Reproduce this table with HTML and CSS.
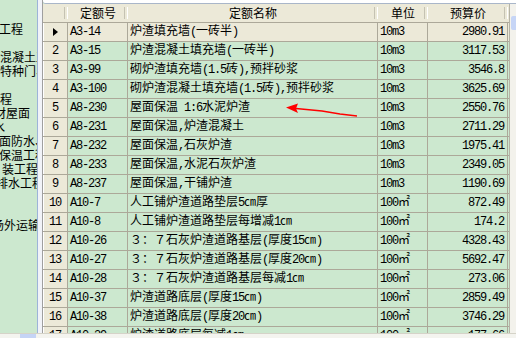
FILE: index.html
```html
<!DOCTYPE html>
<html lang="zh-CN">
<head>
<meta charset="utf-8">
<title>定额</title>
<link rel="stylesheet" href="styles.css">
</head>
<body>
<div class="app">
  <aside class="tree">
    <div class="ln t1">工程</div>
    <div class="ln"></div>
    <div class="ln t0">混凝土工程</div>
    <div class="ln t0">特种门、窗</div>
    <div class="ln"></div>
    <div class="ln t0">程</div>
    <div class="ln t2">材屋面</div>
    <div class="ln t3">水</div>
    <div class="ln t1">面防水、</div>
    <div class="ln t1">保温工程</div>
    <div class="ln t4">装工程</div>
    <div class="ln t5">排水工程</div>
    <div class="ln"></div>
    <div class="ln"></div>
    <div class="ln t6">场外运输</div>
  </aside>
  <div class="split"></div>
  <main class="main">
    <div class="top"></div>
    <div class="body">
      <div class="grid">
        <div class="hdr">
          <div class="h w0"></div>
          <div class="h w1">定额号</div>
          <div class="h w2">定额名称</div>
          <div class="h w3">单位</div>
          <div class="h w4">预算价</div>
        </div>
        <div class="row cur">
          <div class="c w0 ind ptr"><span class="tri"></span></div>
          <div class="c w1 n">A3-14</div>
          <div class="c w2">炉渣填充墙<span class="a">(</span>一砖半<span class="a">)</span></div>
          <div class="c w3 n">10m3</div>
          <div class="c w4 n r">2980.91</div>
        </div>
        <div class="row">
          <div class="c w0 ind n">2</div>
          <div class="c w1 n">A3-15</div>
          <div class="c w2">炉渣混凝土填充墙<span class="a">(</span>一砖半<span class="a">)</span></div>
          <div class="c w3 n">10m3</div>
          <div class="c w4 n r">3117.53</div>
        </div>
        <div class="row">
          <div class="c w0 ind n">3</div>
          <div class="c w1 n">A3-99</div>
          <div class="c w2">砌炉渣填充墙<span class="a">(1.5</span>砖<span class="a">),</span>预拌砂浆</div>
          <div class="c w3 n">10m3</div>
          <div class="c w4 n r">3546.8</div>
        </div>
        <div class="row">
          <div class="c w0 ind n">4</div>
          <div class="c w1 n">A3-100</div>
          <div class="c w2">砌炉渣混凝土填充墙<span class="a">(1.5</span>砖<span class="a">),</span>预拌砂浆</div>
          <div class="c w3 n">10m3</div>
          <div class="c w4 n r">3625.69</div>
        </div>
        <div class="row">
          <div class="c w0 ind n">5</div>
          <div class="c w1 n">A8-230</div>
          <div class="c w2">屋面保温<span class="a"> 1:6</span>水泥炉渣</div>
          <div class="c w3 n">10m3</div>
          <div class="c w4 n r">2550.76</div>
        </div>
        <div class="row">
          <div class="c w0 ind n">6</div>
          <div class="c w1 n">A8-231</div>
          <div class="c w2">屋面保温<span class="a">,</span>炉渣混凝土</div>
          <div class="c w3 n">10m3</div>
          <div class="c w4 n r">2711.29</div>
        </div>
        <div class="row">
          <div class="c w0 ind n">7</div>
          <div class="c w1 n">A8-232</div>
          <div class="c w2">屋面保温<span class="a">,</span>石灰炉渣</div>
          <div class="c w3 n">10m3</div>
          <div class="c w4 n r">1975.41</div>
        </div>
        <div class="row">
          <div class="c w0 ind n">8</div>
          <div class="c w1 n">A8-233</div>
          <div class="c w2">屋面保温<span class="a">,</span>水泥石灰炉渣</div>
          <div class="c w3 n">10m3</div>
          <div class="c w4 n r">2349.05</div>
        </div>
        <div class="row">
          <div class="c w0 ind n">9</div>
          <div class="c w1 n">A8-237</div>
          <div class="c w2">屋面保温<span class="a">,</span>干铺炉渣</div>
          <div class="c w3 n">10m3</div>
          <div class="c w4 n r">1190.69</div>
        </div>
        <div class="row">
          <div class="c w0 ind n">10</div>
          <div class="c w1 n">A10-7</div>
          <div class="c w2">人工铺炉渣道路垫层<span class="a">5</span>㎝厚</div>
          <div class="c w3 n">100<span class="sq">㎡</span></div>
          <div class="c w4 n r">872.49</div>
        </div>
        <div class="row">
          <div class="c w0 ind n">11</div>
          <div class="c w1 n">A10-8</div>
          <div class="c w2">人工铺炉渣道路垫层每增减<span class="a">1</span>㎝</div>
          <div class="c w3 n">100<span class="sq">㎡</span></div>
          <div class="c w4 n r">174.2</div>
        </div>
        <div class="row">
          <div class="c w0 ind n">12</div>
          <div class="c w1 n">A10-26</div>
          <div class="c w2">３：７石灰炉渣道路基层<span class="a">(</span>厚度<span class="a">15</span>㎝<span class="a">)</span></div>
          <div class="c w3 n">100<span class="sq">㎡</span></div>
          <div class="c w4 n r">4328.43</div>
        </div>
        <div class="row">
          <div class="c w0 ind n">13</div>
          <div class="c w1 n">A10-27</div>
          <div class="c w2">３：７石灰炉渣道路基层<span class="a">(</span>厚度<span class="a">20</span>㎝<span class="a">)</span></div>
          <div class="c w3 n">100<span class="sq">㎡</span></div>
          <div class="c w4 n r">5692.47</div>
        </div>
        <div class="row">
          <div class="c w0 ind n">14</div>
          <div class="c w1 n">A10-28</div>
          <div class="c w2">３：７石灰炉渣道路基层每减<span class="a">1</span>㎝</div>
          <div class="c w3 n">100<span class="sq">㎡</span></div>
          <div class="c w4 n r">273.06</div>
        </div>
        <div class="row">
          <div class="c w0 ind n">15</div>
          <div class="c w1 n">A10-37</div>
          <div class="c w2">炉渣道路底层<span class="a">(</span>厚度<span class="a">15</span>㎝<span class="a">)</span></div>
          <div class="c w3 n">100<span class="sq">㎡</span></div>
          <div class="c w4 n r">2859.49</div>
        </div>
        <div class="row">
          <div class="c w0 ind n">16</div>
          <div class="c w1 n">A10-38</div>
          <div class="c w2">炉渣道路底层<span class="a">(</span>厚度<span class="a">20</span>㎝<span class="a">)</span></div>
          <div class="c w3 n">100<span class="sq">㎡</span></div>
          <div class="c w4 n r">3746.29</div>
        </div>
        <div class="row">
          <div class="c w0 ind n">17</div>
          <div class="c w1 n">A10-39</div>
          <div class="c w2">炉渣道路底层每减<span class="a">1</span>㎝</div>
          <div class="c w3 n">100<span class="sq">㎡</span></div>
          <div class="c w4 n r">177.66</div>
        </div>
      </div>
      <div class="vs"><div class="vs-btn"></div></div>
    </div>
  </main>
</div>
<div class="hs"><div class="hs-thumb"></div></div>
<svg class="mark" width="516" height="338" viewBox="0 0 516 338">
  <polyline points="296,108.5 322,111 340,114 357,116" fill="none" stroke="#f00" stroke-width="1.5"/>
  <polygon points="286,107.5 298,103.5 296,108.5 298,113" fill="#f00"/>
</svg>
</body>
</html>
```
FILE: styles.css
```css
* { box-sizing: border-box; }
html, body { margin: 0; }
body {
  width: 516px;
  height: 338px;
  overflow: hidden;
  position: relative;
  background: #cce8cf;
  color: #000;
  font-family: "Noto Sans CJK SC", sans-serif;
  font-size: 12px;
}
.app { display: flex; height: 333px; }

.tree {
  width: 37px;
  flex: none;
  overflow: hidden;
  padding-top: 22px;
  background: #cce8cf;
}
.ln { height: 14px; line-height: 14px; white-space: nowrap; }
.t0 { margin-left: 0; }
.t1 { margin-left: -1px; }
.t2 { margin-left: -6px; }
.t3 { margin-left: -7px; }
.t4 { margin-left: 2px; }
.t5 { margin-left: -4px; }
.t6 { margin-left: -8px; }

.split {
  width: 6px;
  flex: none;
  border-left: 1px solid #9db3d8;
  border-right: 1px solid #9f9f9f;
  background: #f1f3f8;
}

.main { flex: 1; min-width: 0; display: flex; flex-direction: column; }
.top {
  height: 4px;
  flex: none;
  background: #fff;
  border-bottom: 1px solid #a9b6c9;
  border-bottom-left-radius: 3px;
}
.body { flex: 1; min-height: 0; display: flex; }
.grid { flex: 1; min-width: 0; overflow: hidden; background: #cce8cf; }
.vs {
  width: 7px;
  flex: none;
  border-left: 1px solid #b5b3a6;
  background: #f3f2ec;
}
.vs-btn {
  margin: 12px 0 0 1px;
  height: 14px;
  background: #c6d5f6;
  border-radius: 2px 0 0 2px;
}

.hdr {
  display: flex;
  height: 19px;
  background: #ece9d8;
  border-bottom: 1px solid #aca899;
}
.h {
  position: relative;
  height: 18px;
  line-height: 18px;
  text-align: center;
  white-space: nowrap;
}
.h::after {
  content: "";
  position: absolute;
  right: 0;
  top: 3px;
  bottom: 3px;
  width: 2px;
  border-left: 1px solid #c5c2b2;
  border-right: 1px solid #fff;
}

.w0 { width: 25px; flex: none; }
.w1 { width: 60px; flex: none; }
.w2 { width: 250px; flex: none; }
.w3 { width: 50px; flex: none; }
.w4 { width: 80px; flex: none; }

.row {
  display: flex;
  height: 19px;
  border-bottom: 1px solid #aca899;
}
.row.cur { background: #ece9d8; }
.c {
  height: 18px;
  padding: 0 2px;
  border-right: 1px solid #aca899;
  white-space: nowrap;
  overflow: hidden;
  line-height: 14px;
}
.n {
  font-family: "Liberation Mono", monospace;
  letter-spacing: -1.2px;
  line-height: 18px;
}
.a {
  font-family: "Liberation Mono", monospace;
  letter-spacing: -1.2px;
  line-height: 12px;
}
.sq {
  font-family: "Noto Sans CJK SC", sans-serif;
  letter-spacing: 0;
  line-height: 12px;
}
.r { text-align: right; padding-right: 3px; }
.ind {
  padding: 0;
  text-align: center;
  background: #ece9d8;
  box-shadow: inset 1px 0 0 #fff;
}
.ptr { display: flex; align-items: center; justify-content: center; }
.tri {
  width: 0;
  height: 0;
  border-left: 5px solid #000;
  border-top: 4.5px solid transparent;
  border-bottom: 4.5px solid transparent;
}

.hs {
  height: 5px;
  display: flex;
  background: #f4f4ef;
  border-top: 1px solid #d5d3c8;
}
.hs-thumb { margin-left: 20px; width: 16px; background: #c5d4f5; }

.mark { position: absolute; left: 0; top: 0; pointer-events: none; }
```
